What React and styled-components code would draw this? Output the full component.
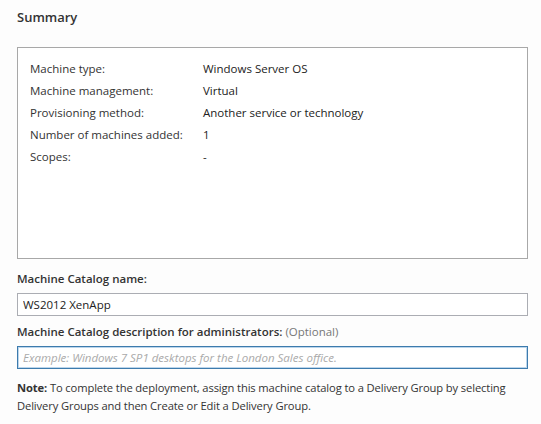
import React from 'react';
import styled, { createGlobalStyle } from 'styled-components';

const Global = createGlobalStyle`
	html, body {
		margin: 0;
		padding: 0;
		background: #fdfdfd;
	}
	body {
		font-family: "Open Sans", "Noto Sans", sans-serif;
		color: #222;
	}
`

const Page = styled.div`
	width: 541px;
	height: 424px;
	padding: 6px 13px 0 17px;
	box-sizing: border-box;
	display: flex;
	flex-direction: column;
`

const Title = styled.div`
	font-size: 13px;
	font-weight: 600;
	color: #333;
	height: 22px;
	line-height: 22px;
	margin-bottom: 19px;
`

const SummaryBox = styled.div`
	height: 212px;
	box-sizing: border-box;
	border: 1px solid #a8a8a8;
	background: #fff;
	padding: 10px 12px;
	display: grid;
	grid-template-columns: 173px 1fr;
	grid-auto-rows: 22px;
	align-content: start;
	font-size: 11.5px;
`

const Cell = styled.div`
	line-height: 22px;
	color: ${p => p.value ? '#222' : '#333'};
	font-weight: ${p => p.value ? 500 : 400};
	white-space: nowrap;
`

const Label = styled.div`
	font-size: 11.5px;
	font-weight: 600;
	color: #333;
	line-height: 18px;
	margin-top: ${p => p.top}px;
	margin-bottom: 5px;
	white-space: nowrap;
`

const Muted = styled.span`
	font-weight: 500;
	color: #777;
`

const Input = styled.input`
	display: block;
	width: 100%;
	height: 23px;
	box-sizing: border-box;
	margin: 0;
	padding: 0 5px;
	font-family: inherit;
	font-size: 11.5px;
	color: #222;
	background: #fff;
	border: 1px solid ${p => p.focused ? '#3d7bad' : '#abadb3'};
	box-shadow: ${p => p.focused ? 'inset 0 0 0 1px #bcd6ec' : 'none'};
	outline: none;
	&::placeholder {
		color: #aaa;
		font-style: italic;
	}
`

const Note = styled.p`
	margin: 10px 0 0;
	font-size: 11.2px;
	letter-spacing: -0.12px;
	line-height: 18px;
	color: #333;
	b { font-weight: 700; }
`

const rows = [
	['Machine type:', 'Windows Server OS'],
	['Machine management:', 'Virtual'],
	['Provisioning method:', 'Another service or technology'],
	['Number of machines added:', '1'],
	['Scopes:', '-'],
]

export default function App() {
	return (
		<React.Fragment>
			<Global />
			<Page>
				<Title>Summary</Title>
				<SummaryBox>
					{rows.map(([k, v]) => (
						<React.Fragment key={k}>
							<Cell>{k}</Cell>
							<Cell value>{v}</Cell>
						</React.Fragment>
					))}
				</SummaryBox>
				<Label top={11}>Machine Catalog name:</Label>
				<Input defaultValue="WS2012 XenApp" readOnly />
				<Label top={7}>Machine Catalog description for administrators: <Muted>(Optional)</Muted></Label>
				<Input focused placeholder="Example: Windows 7 SP1 desktops for the London Sales office." readOnly />
				<Note><b>Note:</b> To complete the deployment, assign this machine catalog to a Delivery Group by selecting Delivery Groups and then Create or Edit a Delivery Group.</Note>
			</Page>
		</React.Fragment>
	)
}
